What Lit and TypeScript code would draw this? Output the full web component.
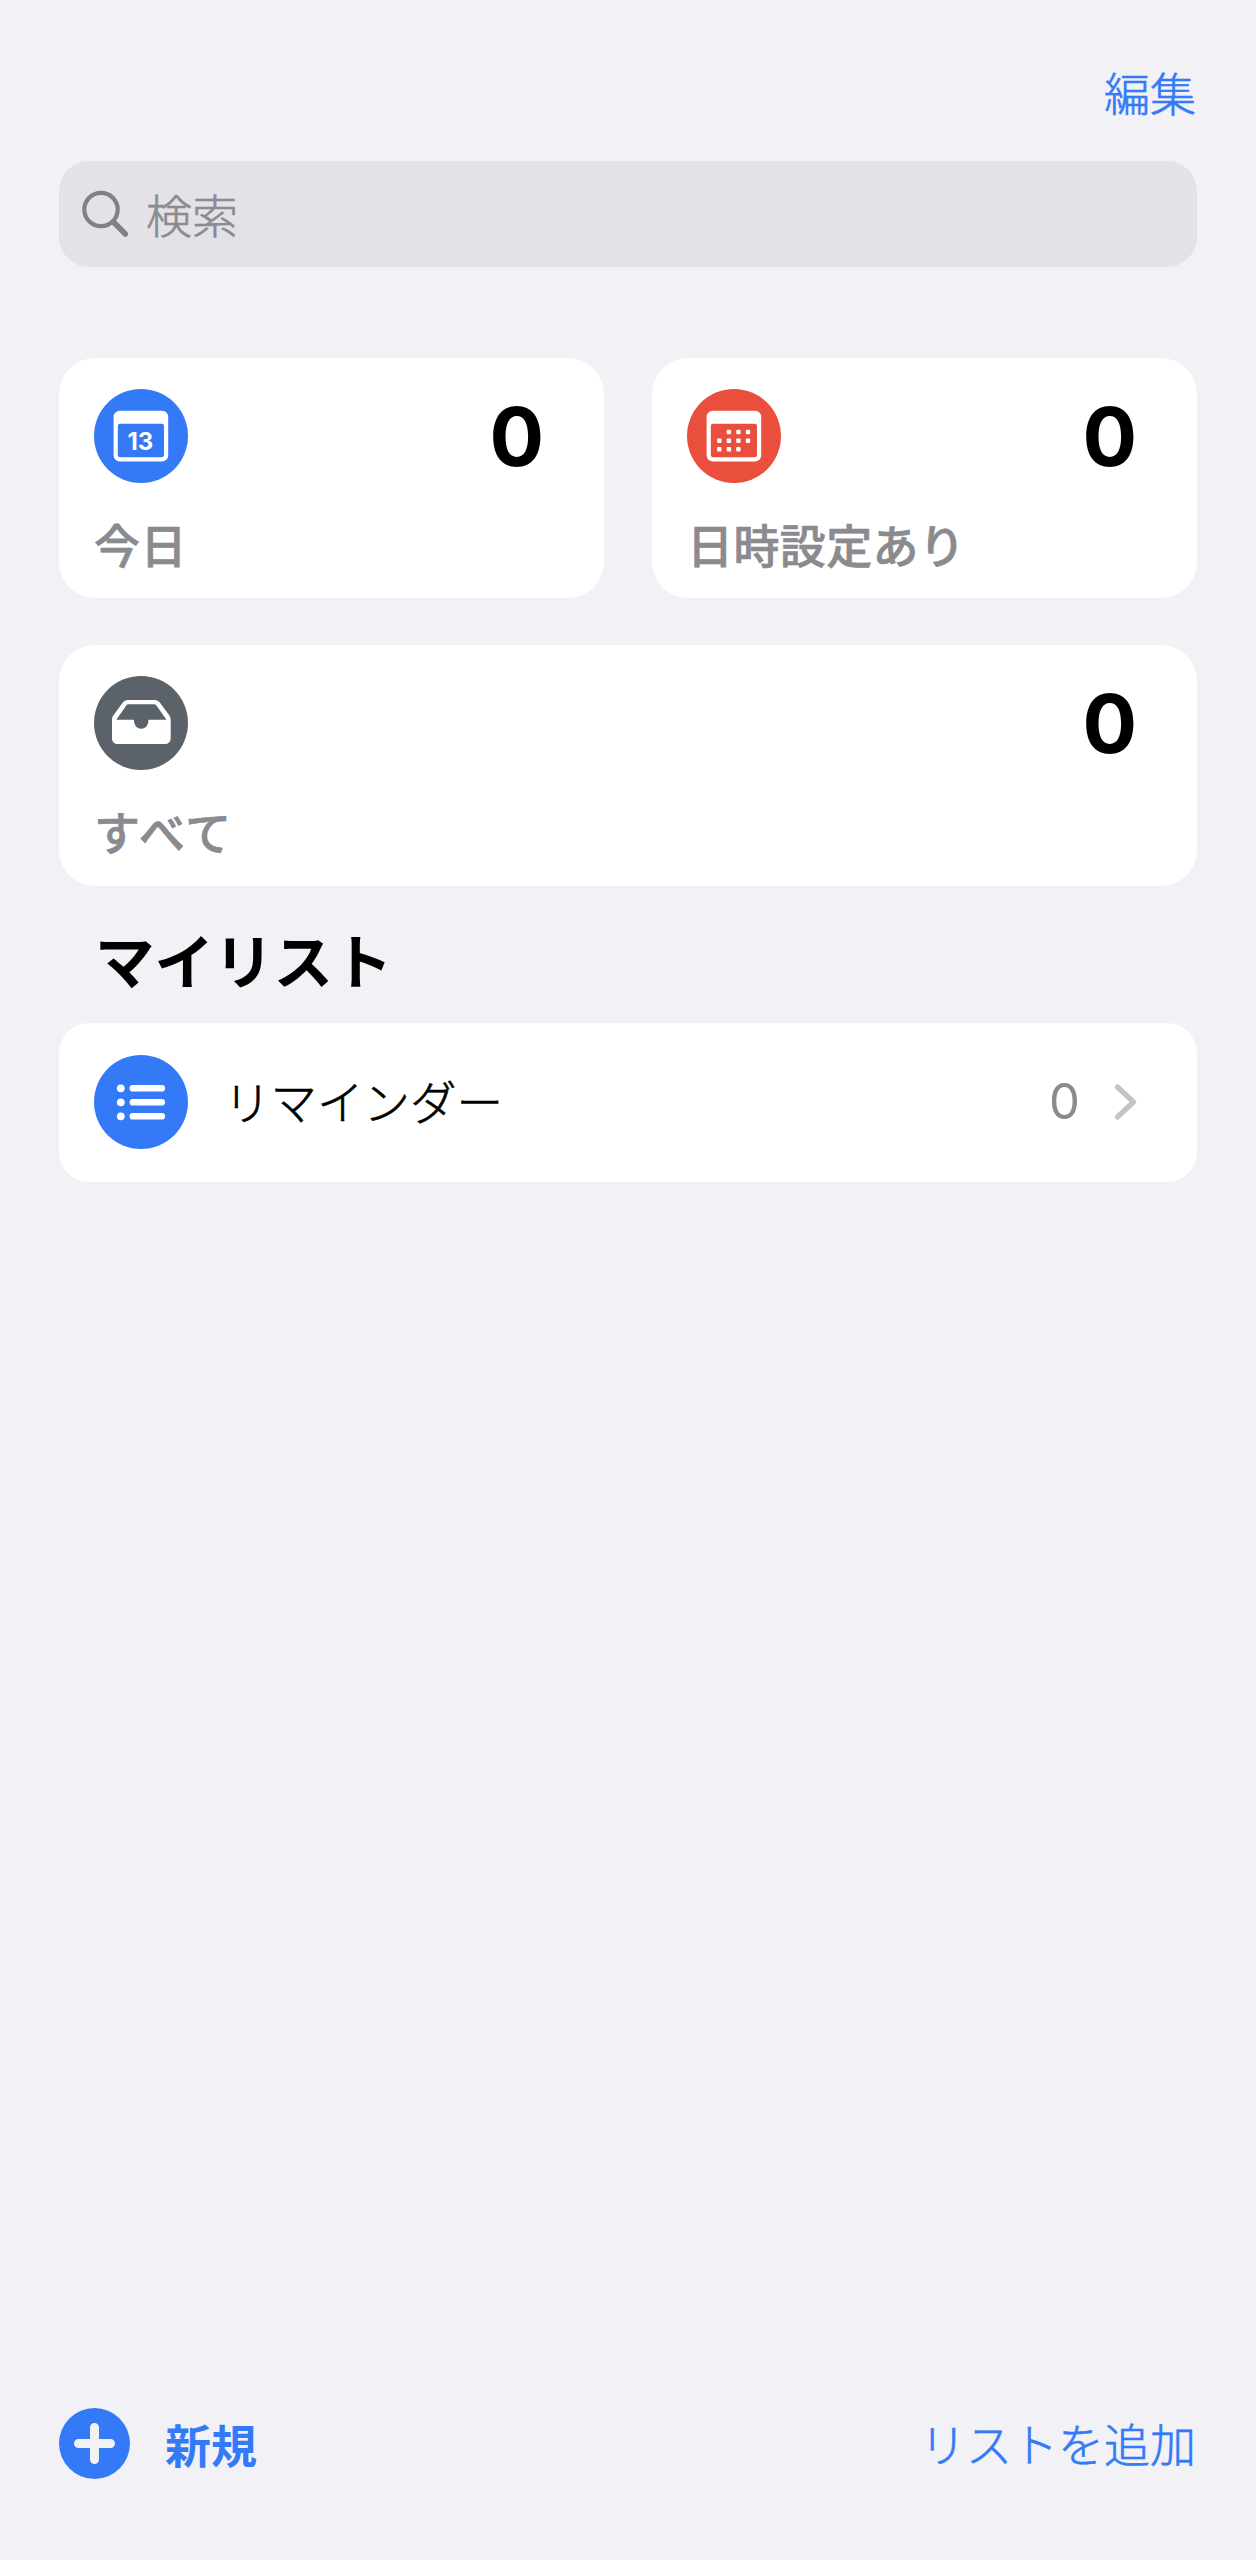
import { LitElement, html, css, svg, TemplateResult } from "lit";
import { customElement, property } from "lit/decorators.js";

type IconName = "today" | "scheduled" | "all" | "list";

const calendarFrame = svg`
  <path
    fill="#fff"
    fill-rule="evenodd"
    d="M25.8 21.800h42.200a6.2 6.2 0 0 1 6.2 6.2v38.300a6.2 6.2 0 0 1-6.2 6.2h-42.200a6.2 6.2 0 0 1-6.2-6.2v-38.300a6.2 6.2 0 0 1 6.2-6.2zM26.100 34.700a2.3 2.3 0 0 0-2.3 2.3v29a2.300 2.300 0 0 0 2.300 2.300h41.600a2.300 2.300 0 0 0 2.300-2.300v-29a2.300 2.300 0 0 0-2.300-2.300z"
  ></path>
`;

const columns = [32.3, 41.9, 51.4, 61];
const rows = [43, 51.7, 60.3];
const dots = rows.flatMap((y, r) =>
  columns
    .filter((_, c) => !(r === 0 && c === 0) && !(r === 2 && c === 3))
    .map((x) => svg`<rect x=${x - 2.2} y=${y - 2.2} width="4.4" height="4.4" rx="1" fill="#fff"></rect>`)
);

const glyphs: Record<IconName, TemplateResult> = {
  today: svg`
    ${calendarFrame}
    <text class="day" x="46.300" y="60.800" text-anchor="middle">13</text>
  ` as unknown as TemplateResult,
  scheduled: svg`${calendarFrame}${dots}` as unknown as TemplateResult,
  all: svg`
    <path
      fill="#fff"
      fill-rule="evenodd"
      d="M33.500 24H61q3 0 4.800 2.500L75.400 39.600Q76.700 41.300 76.700 43.500V62.500a5.500 5.500 0 0 1-5.500 5.500H23.500a5.500 5.500 0 0 1-5.500-5.500V43.500Q18 41.300 19.300 39.600L28.800 26.500Q30.500 24 33.500 24zM34.500 28.200q-1.400 0-2.300 1.200L22.400 43.800H39.300q.8 0 .8.900v1a7.100 7.100 0 0 0 14.200 0v-1q0-.9.8-.9H72.500L62.400 29.400q-.9-1.200-2.300-1.200z"
    ></path>
  ` as unknown as TemplateResult,
  list: svg`
    ${[33.3, 47.3, 61.3].map(
      (y) => svg`
        <circle cx="26.800" cy=${y} r="3.900" fill="#fff"></circle>
        <rect x="35.600" y=${y - 3.3} width="35.400" height="6.600" rx="3.100" fill="#fff"></rect>
      `
    )}
  ` as unknown as TemplateResult,
};

@customElement("round-icon")
export class RoundIcon extends LitElement {
  @property() name: IconName = "list";

  static styles = css`
    :host {
      display: block;
      flex: none;
      width: 94px;
      height: 94px;
    }
    .icon {
      display: block;
      width: 94px;
      height: 94px;
    }
    .today,
    .list {
      fill: #347af6;
    }
    .scheduled {
      fill: #ea4f3d;
    }
    .all {
      fill: #5b626a;
    }
    .day {
      font: 700 24px Inter, sans-serif;
      fill: #fff;
    }
  `;

  render() {
    return html`
      <svg class="icon" viewBox="0 0 94 94">
        <circle class=${this.name} cx="47" cy="47" r="47"></circle>
        ${glyphs[this.name]}
      </svg>
    `;
  }
}

@customElement("summary-tile")
export class SummaryTile extends LitElement {
  @property() icon: IconName = "today";
  @property() label = "";
  @property({ type: Number }) count = 0;

  static styles = css`
    :host {
      display: block;
      box-sizing: border-box;
      padding: 31px 60px 25px 35px;
      background: #fff;
      border-radius: 36px;
    }
    .top {
      display: flex;
      align-items: center;
      justify-content: space-between;
      height: 94px;
    }
    .count {
      padding-top: 2px;
      font: 700 81px/94px Inter, sans-serif;
      color: #000;
    }
    .label {
      margin-top: 30px;
      font-size: 46px;
      line-height: 60px;
      font-weight: 500;
      letter-spacing: 0.4px;
      -webkit-text-stroke: 0.7px #8a8a8f;
      color: #8a8a8f;
      white-space: nowrap;
    }
    .all {
      letter-spacing: 2.2px;
    }
  `;

  render() {
    return html`
      <div class="top">
        <round-icon name=${this.icon}></round-icon>
        <span class="count">${this.count}</span>
      </div>
      <div class="label ${this.icon}">${this.label}</div>
    `;
  }
}

@customElement("app-root")
export class AppRoot extends LitElement {
  static styles = css`
    :host {
      display: flex;
      flex-direction: column;
      box-sizing: border-box;
      height: 2560px;
      padding: 61px 59px 81px;
      background: #f1f1f6;
      font-family: "Noto Sans CJK JP", sans-serif;
      color: #000;
    }
    .link {
      font-size: 46px;
      line-height: 60px;
      font-weight: 300;
      -webkit-text-stroke: 0.6px currentColor;
      color: #347af6;
    }
    .header {
      display: flex;
      justify-content: flex-end;
      height: 60px;
      padding-right: 1px;
    }
    .search {
      display: flex;
      align-items: center;
      height: 106px;
      margin-top: 40px;
      padding-left: 22px;
      box-sizing: border-box;
      border-radius: 30px;
      background: #e3e2e7;
    }
    .lens {
      width: 48px;
      height: 48px;
      margin-right: 17px;
    }
    .placeholder {
      font-size: 46px;
      line-height: 60px;
      font-weight: 300;
      -webkit-text-stroke: 0.6px currentColor;
      color: #8c8b91;
      padding-bottom: 3px;
    }
    .tiles {
      display: grid;
      grid-template-columns: 1fr 1fr;
      grid-template-rows: 240px 241px;
      gap: 47px 48px;
      margin-top: 91px;
    }
    .wide {
      grid-column: 1 / -1;
    }
    .title {
      margin: 32px 0 0 36px;
      font-size: 59.5px;
      line-height: 80px;
      font-weight: 700;
    }
    .row {
      display: flex;
      align-items: center;
      box-sizing: border-box;
      height: 159px;
      margin-top: 25px;
      padding: 0 60px 2px 35px;
      border-radius: 30px;
      background: #fff;
    }
    .name {
      flex: 1;
      margin-left: 36px;
      padding-bottom: 4px;
      font-size: 46.5px;
      line-height: 60px;
      font-weight: 300;
      -webkit-text-stroke: 0.6px currentColor;
    }
    .number {
      font: 400 49px/60px Inter, sans-serif;
      color: #8a8a8f;
    }
    .chevron {
      width: 24px;
      height: 40px;
      margin-left: 33px;
    }
    .footer {
      display: flex;
      align-items: center;
      justify-content: space-between;
      height: 71px;
      margin-top: auto;
      padding-right: 1px;
    }
    .new {
      display: flex;
      align-items: center;
      gap: 35px;
    }
    .plus {
      width: 71px;
      height: 71px;
    }
    .footer .link {
      padding-bottom: 4px;
    }
    .footer .strong {
      padding-bottom: 2px;
      font-weight: 700;
      -webkit-text-stroke: 0;
    }
  `;

  render() {
    return html`
      <div class="header"><span class="link">編集</span></div>
      <div class="search">
        <svg class="lens" viewBox="0 0 48 48" fill="none" stroke="#808085" stroke-linecap="round">
          <circle cx="20" cy="19.500" r="16.700" stroke-width="4.200"></circle>
          <path d="M32.500 32L44.300 44" stroke-width="5.600"></path>
        </svg>
        <span class="placeholder">検索</span>
      </div>
      <div class="tiles">
        <summary-tile icon="today" label="今日" count="0"></summary-tile>
        <summary-tile icon="scheduled" label="日時設定あり" count="0"></summary-tile>
        <summary-tile class="wide" icon="all" label="すべて" count="0"></summary-tile>
      </div>
      <div class="title">マイリスト</div>
      <div class="row">
        <round-icon name="list"></round-icon>
        <span class="name">リマインダー</span>
        <span class="number">0</span>
        <svg class="chevron" viewBox="0 0 24 40" fill="none" stroke="#c4c4c6" stroke-width="5.200" stroke-linecap="round" stroke-linejoin="round">
          <path d="M4.500 5L20.500 20L4.500 35"></path>
        </svg>
      </div>
      <div class="footer">
        <div class="new">
          <svg class="plus" viewBox="0 0 71 71">
            <circle cx="35.500" cy="35.500" r="35.500" fill="#347af6"></circle>
            <path d="M35.500 19.500V51.500M19.500 35.500H51.500" stroke="#f1f1f6" stroke-width="9" stroke-linecap="round"></path>
          </svg>
          <span class="link strong">新規</span>
        </div>
        <span class="link">リストを追加</span>
      </div>
    `;
  }
}
